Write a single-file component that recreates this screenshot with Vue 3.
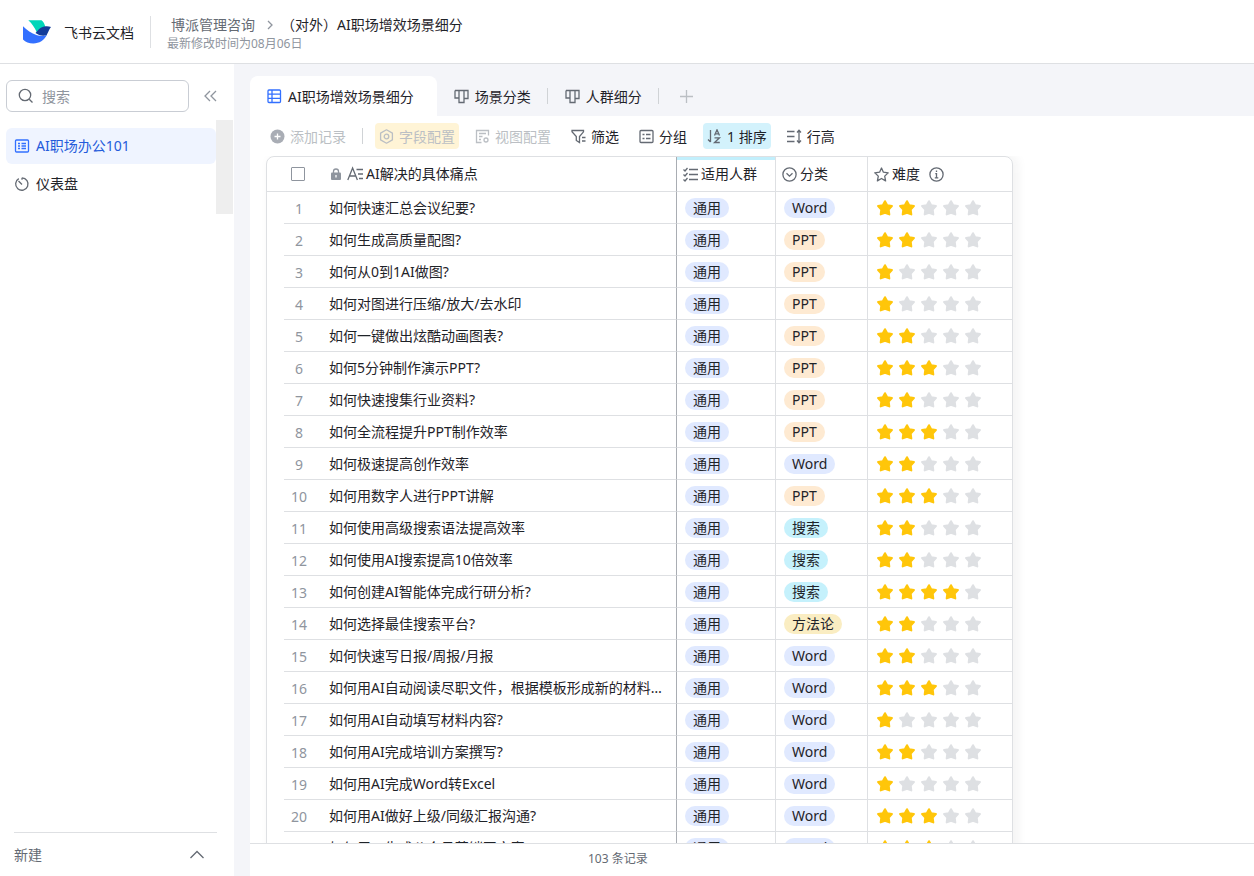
<script setup>
import { ref } from 'vue'

const keyword = ref('')
const allChecked = ref(false)

const tagColors = { Word: 'blue', PPT: 'orange', 搜索: 'cyan', 方法论: 'yellow' }

const rows = [
  ['如何快速汇总会议纪要?', 'Word', 2],
  ['如何生成高质量配图?', 'PPT', 2],
  ['如何从0到1AI做图?', 'PPT', 1],
  ['如何对图进行压缩/放大/去水印', 'PPT', 1],
  ['如何一键做出炫酷动画图表?', 'PPT', 2],
  ['如何5分钟制作演示PPT?', 'PPT', 3],
  ['如何快速搜集行业资料?', 'PPT', 2],
  ['如何全流程提升PPT制作效率', 'PPT', 3],
  ['如何极速提高创作效率', 'Word', 2],
  ['如何用数字人进行PPT讲解', 'PPT', 3],
  ['如何使用高级搜索语法提高效率', '搜索', 2],
  ['如何使用AI搜索提高10倍效率', '搜索', 2],
  ['如何创建AI智能体完成行研分析?', '搜索', 4],
  ['如何选择最佳搜索平台?', '方法论', 2],
  ['如何快速写日报/周报/月报', 'Word', 2],
  ['如何用AI自动阅读尽职文件，根据模板形成新的材料内容', 'Word', 3],
  ['如何用AI自动填写材料内容?', 'Word', 1],
  ['如何用AI完成培训方案撰写?', 'Word', 2],
  ['如何用AI完成Word转Excel', 'Word', 1],
  ['如何用AI做好上级/同级汇报沟通?', 'Word', 3],
  ['如何用AI生成公众号营销图文案?', 'Word', 3],
].map(([title, tag, stars]) => ({ title, tag, stars, color: tagColors[tag] }))
</script>

<template>
  <div class="page">
    <header class="topbar">
      <svg class="logo" viewBox="0 0 28 24">
        <path d="M0 6.300c4 4 8 7 14 9 4 1 7 1 10-.5-3 5.500-7.500 8.700-13.700 8.700C6 23.500 2.500 22 0 19.500z" fill="#3370ff" />
        <path d="M5.300 .3h13.200c2 1.500 3.200 3.800 3.700 6.200l-8.400 5.800C11.500 7.500 9 3.500 5.300 .3z" fill="#00d6b9" />
        <path d="M12.500 13c3-3.500 6-6.500 10-6.700 2-.1 4 0 5.500.7-2 2-2.500 5-4.300 8-3.700 1.700-8 .3-11.200-2z" fill="#133c9a" />
      </svg>
      <span class="brand">飞书云文档</span>
      <span class="top-divider"></span>
      <div class="heading">
        <nav class="crumbs">
          <a href="#">博派管理咨询</a>
          <svg class="chevron" viewBox="0 0 8 12"><path d="M2 2l4 4-4 4" /></svg>
          <span class="doc">（对外）AI职场增效场景细分</span>
        </nav>
        <div class="modified">最新修改时间为08月06日</div>
      </div>
    </header>

    <div class="body">
      <aside class="side">
        <div class="search-row">
          <label class="search">
            <svg class="i16" viewBox="0 0 16 16"><circle cx="7" cy="7" r="5.700" /><path d="M11.200 11.200L14.500 14.500" /></svg>
            <input v-model="keyword" type="text" placeholder="搜索" aria-label="搜索" />
          </label>
          <button class="collapse" aria-label="收起">
            <svg class="i16" viewBox="0 0 16 16"><path d="M8 3L3 8l5 5M14 3L9 8l5 5" /></svg>
          </button>
        </div>
        <div class="side-list">
          <nav>
            <a href="#" class="active">
              <svg class="i16" viewBox="0 0 16 16"><rect x="1.500" y="2" width="13" height="12" rx="1" /><path d="M4 5.500h2M7.500 5.500H12M4 8h2M7.500 8H12M4 10.500h2M7.500 10.500H12" /></svg>
              AI职场办公101
            </a>
            <a href="#">
              <svg class="i16" viewBox="0 0 16 16"><path d="M4.800 2.600A6.200 6.200 0 1 0 8 1.800M8 1.800v2M8 8.500L4.500 5" /></svg>
              仪表盘
            </a>
          </nav>
          <div class="scroll-thumb"></div>
        </div>
        <button class="create">
          <span>新建</span>
          <svg class="i16" viewBox="0 0 16 16"><path d="M1.500 11L8 4.500l6.500 6.500" /></svg>
        </button>
      </aside>

      <main class="main">
        <div class="tabs">
          <button class="tab current">
            <svg class="i15" viewBox="0 0 15 15"><rect x="1" y="1" width="12.500" height="12.500" rx="1" /><path d="M1 5.200h12.500M1 9.400h12.500M5 1v12.500" /></svg>
            AI职场增效场景细分
          </button>
          <button class="tab">
            <svg class="i15" viewBox="0 0 15 15"><path d="M1 1.500h13v8h-4v-8M1 1.500v7.500h4v-7.500M5 1.500v12h5V1.500" /></svg>
            场景分类
          </button>
          <span class="sep"></span>
          <button class="tab">
            <svg class="i15" viewBox="0 0 15 15"><path d="M1 1.500h13v8h-4v-8M1 1.500v7.500h4v-7.500M5 1.500v12h5V1.500" /></svg>
            人群细分
          </button>
          <span class="sep"></span>
          <button class="tab add" aria-label="新增视图">
            <svg class="i15" viewBox="0 0 15 15"><path d="M7.500 1v13M1 7.500h13" /></svg>
          </button>
        </div>

        <div class="sheet">
          <div class="toolbar">
            <button class="tool muted">
              <svg class="i15" viewBox="0 0 15 15"><circle cx="7.500" cy="7.500" r="7" class="solid" /><path d="M7.500 4.500v6M4.500 7.500h6" class="white" /></svg>
              添加记录
            </button>
            <span class="sep"></span>
            <button class="tool muted sand">
              <svg class="i15" viewBox="0 0 15 15"><path d="M7.500 .8l5.900 3.300v6.800l-5.900 3.300-5.900-3.300V4.100z" stroke-linejoin="round" /><circle cx="7.500" cy="7.500" r="2.300" /></svg>
              字段配置
            </button>
            <button class="tool muted">
              <svg class="i15" viewBox="0 0 15 15"><path d="M13.500 6.500v-5h-12v12h5M4 4.500h7M4 7.500h3.500M4 10.500h2" /><circle cx="11" cy="11" r="2" /></svg>
              视图配置
            </button>
            <button class="tool">
              <svg class="i15" viewBox="0 0 15 15"><path d="M1 1.500h11.500v1.300L8.500 7.500v6l-3.200-2V7.500L1 2.800zM11 8.500h3.500M11 12h3.500" /></svg>
              筛选
            </button>
            <button class="tool">
              <svg class="i15" viewBox="0 0 15 15"><rect x="1" y="1.500" width="13" height="12" rx="1" /><path d="M3.500 5.500h2M7 5.500h4.500M3.500 9.500h2M7 9.500h4.500" /></svg>
              分组
            </button>
            <button class="tool sky">
              <svg class="i15" viewBox="0 0 15 15"><path d="M3.500 1v12M1 10.500L3.500 13M7.500 6.500L10 .8l2.500 5.700M8.300 4.800h3.400M7.500 8.800h5l-5 4.700h5.300" /></svg>
              1 排序
            </button>
            <button class="tool">
              <svg class="i15" viewBox="0 0 15 15"><path d="M0 2.500h7.500M0 7.500h7.500M0 12.500h7.500M12 1v13M10 3.500L12 1.300l2 2.200M10 11.500l2 2.200 2-2.200" /></svg>
              行高
            </button>
          </div>

          <div class="grid-area">
            <table class="grid">
              <colgroup>
                <col class="c-no" /><col class="c-title" /><col class="c-group" /><col class="c-type" /><col class="c-level" />
              </colgroup>
              <thead>
                <tr>
                  <th class="no-head"><input v-model="allChecked" type="checkbox" aria-label="全选" /></th>
                  <th class="title-cell">
                    <div class="th">
                      <svg class="lock" viewBox="0 0 10 12"><path d="M2.500 5V3.500a2.500 2.500 0 0 1 5 0V5" /><rect x="0" y="4.500" width="10" height="7.500" rx="1" class="solid" /><path d="M5 7v2.500" class="white" /></svg>
                      <svg class="i16" viewBox="0 0 16 16"><path d="M.8 14L5.600 2l4.800 12M2.400 10h6.400M9.500 3.500H16M11 8h5M12 12.500h4" /></svg>
                      AI解决的具体痛点
                    </div>
                  </th>
                  <th class="sorted">
                    <div class="th">
                      <svg class="i15" viewBox="0 0 15 15"><path d="M6 2.500h9M6 7.500h9M6 12.500h9M.5 2.500L2 4l2.500-3M.5 7.500L2 9l2.500-3M.5 12.500L2 14l2.500-3" /></svg>
                      适用人群
                    </div>
                  </th>
                  <th>
                    <div class="th">
                      <svg class="i15" viewBox="0 0 15 15"><circle cx="7.500" cy="7.500" r="6.600" /><path d="M4.500 6.200l3 3 3-3" /></svg>
                      分类
                    </div>
                  </th>
                  <th>
                    <div class="th">
                      <svg class="i15" viewBox="0 0 15 15"><path stroke-linejoin="round" d="M7.500 1l1.900 4.200 4.800.6-3.500 3.300.9 4.800-4.100-2.400-4.100 2.400.9-4.800L.8 5.800l4.800-.6z" /></svg>
                      难度
                      <svg class="i15 info" viewBox="0 0 15 15"><circle cx="7.500" cy="7.500" r="6.600" /><path d="M7.500 3.500V5M6.300 6.700h1.200v4M5.800 10.800h3.500" /></svg>
                    </div>
                  </th>
                </tr>
              </thead>
              <tbody>
                <tr v-for="(row, i) in rows" :key="i">
                  <td class="no-cell"><div class="no">{{ i + 1 }}</div></td>
                  <td class="title-cell"><div class="text">{{ row.title }}</div></td>
                  <td><span class="pill blue">通用</span></td>
                  <td><span class="pill" :class="row.color">{{ row.tag }}</span></td>
                  <td>
                    <div class="stars" role="img" :aria-label="row.stars + ' / 5'">
                      <svg v-for="n in 5" :key="n" class="star" :class="{ on: n <= row.stars }" viewBox="0 0 16 16">
                        <path d="M8 1.200l2.200 4 4.700 .9-3.200 3.500.6 4.800L8 12.700l-4.300 1.700.6-4.800L1.100 6.100l4.700-.9z" />
                      </svg>
                    </div>
                  </td>
                </tr>
              </tbody>
            </table>
          </div>
          <footer class="status">103 条记录</footer>
        </div>
      </main>
    </div>
  </div>
</template>

<style>
body {
  margin: 0;
}
</style>

<style scoped>
.page {
  height: 100vh;
  display: flex;
  flex-direction: column;
  overflow: hidden;
  background: #fff;
  color: #1f2329;
  font-family: "Noto Sans", "Noto Sans CJK SC", sans-serif;
  font-size: 14px;
  line-height: 20px;
}
button,
input {
  font: inherit;
  color: inherit;
  border: 0;
  padding: 0;
  margin: 0;
  background: none;
}
a {
  color: inherit;
  text-decoration: none;
}
svg {
  flex: none;
  fill: none;
  stroke: #646a73;
  stroke-width: 1.3;
}
.i16 { width: 16px; height: 16px; }
.i15 { width: 15px; height: 15px; }

.topbar {
  display: flex;
  align-items: center;
  height: 63px;
  flex: none;
  padding-left: 23px;
  border-bottom: 1px solid #dee0e3;
}
.logo { width: 28px; height: 24px; stroke: none; }
.brand { margin-left: 13px; padding-top: 2px; }
.top-divider {
  width: 1px;
  height: 32px;
  margin: 0 16px;
  background: #dee0e3;
}
.heading { padding-top: 4px; }
.crumbs {
  display: flex;
  align-items: center;
  padding-left: 4px;
  color: #646a73;
}
.chevron { width: 8px; height: 12px; margin: 0 7px 0 11px; stroke: #8f959e; }
.doc { color: #1f2329; }
.modified {
  font-size: 12px;
  line-height: 18px;
  color: #8f959e;
}

.body {
  flex: 1;
  min-height: 0;
  display: flex;
}
.side {
  width: 234px;
  flex: none;
  display: flex;
  flex-direction: column;
}
.search-row {
  display: flex;
  align-items: center;
  padding: 16px 16px 8px 6px;
}
.search {
  flex: 1;
  min-width: 0;
  display: flex;
  align-items: center;
  gap: 8px;
  height: 30px;
  padding: 0 11px;
  border: 1px solid #c9cdd4;
  border-radius: 6px;
}
.search input {
  flex: 1;
  min-width: 0;
  padding-top: 2px;
  outline: none;
}
.search input::placeholder { color: #8f959e; opacity: 1; }
.collapse {
  display: flex;
  margin-left: 13px;
}
.collapse svg { stroke: #8f959e; }
.side-list {
  flex: 1;
  display: flex;
  align-items: flex-start;
}
.side-list nav {
  flex: 1;
  padding: 8px 0 0 6px;
}
.side-list a {
  display: flex;
  align-items: center;
  gap: 6px;
  height: 36px;
  padding-left: 8px;
  margin-bottom: 2px;
  border-radius: 6px;
}
.side-list .active {
  background: #eff4ff;
  color: #245bdb;
}
.side-list .active svg { stroke: #3370ff; }
.scroll-thumb {
  width: 17px;
  height: 94px;
  margin-right: 1px;
  background: #eee;
}
.create {
  display: flex;
  align-items: center;
  justify-content: space-between;
  height: 44px;
  margin: 0 17px 0 14px;
  padding-right: 12px;
  border-top: 1px solid #dee0e3;
  color: #646a73;
}

.main {
  flex: 1;
  min-width: 0;
  display: flex;
  flex-direction: column;
  padding: 12px 0 0 16px;
  background: #f4f5f9;
}
.tabs {
  display: flex;
  align-items: center;
  height: 40px;
  flex: none;
}
.tab {
  display: flex;
  align-items: center;
  gap: 6px;
  height: 40px;
  padding: 1px 16px 0 17px;
}
.tab.current {
  padding-right: 23px;
  border-radius: 8px 8px 0 0;
  background: #fff;
}
.tab.current svg { stroke: #3370ff; }
.tab.add { padding: 0 20px; }
.tab.add svg { stroke: #bbbfc4; }
.sep {
  width: 1px;
  height: 16px;
  background: #d0d3d6;
}
.sheet {
  flex: 1;
  min-height: 0;
  display: flex;
  flex-direction: column;
  background: #fff;
}
.toolbar {
  display: flex;
  align-items: center;
  gap: 12px;
  height: 40px;
  flex: none;
  padding-left: 16px;
}
.tool {
  display: flex;
  align-items: center;
  gap: 5px;
  height: 26px;
  padding: 1px 4px 0;
  border-radius: 4px;
}
.muted { color: #bbbfc4; }
.muted svg { stroke: #bbbfc4; }
.sand { background: #fff4d6; }
.sky { background: #d3f2fc; }
svg .solid { fill: #8f959e; stroke: none; }
.muted .solid { fill: #a9adb5; }
svg .white { stroke: #fff; }

.grid-area {
  flex: 1;
  min-height: 0;
  overflow: hidden;
  padding-left: 16px;
}
.grid {
  width: 747px;
  table-layout: fixed;
  border-collapse: separate;
  border-spacing: 0;
  border: 1px solid #dee0e3;
  border-radius: 8px;
  box-shadow: 4px 0 12px rgba(31, 35, 41, 0.06);
}
.c-no { width: 54px; }
.c-title { width: 356px; }
.c-group { width: 99px; }
.c-type { width: 92px; }
th,
td {
  padding: 0 0 0 8px;
  border-right: 1px solid #dee0e3;
  border-bottom: 1px solid #dee0e3;
  vertical-align: middle;
}
th:last-child,
td:last-child { border-right: 0; }
td:last-child { padding-left: 9px; }
th {
  height: 34px;
  padding-left: 6px;
  font-weight: 400;
  text-align: left;
}
td { height: 31px; }
.no-head { border-right: 0; padding-left: 24px; }
.no-head input {
  display: block;
  appearance: none;
  width: 14px;
  height: 14px;
  border: 1px solid #8f959e;
  border-radius: 1px;
}
.no-head input:checked { background: #3370ff; }
.no-cell { border: 0; padding: 0 0 0 17px; }
.no {
  height: 31px;
  padding: 0 7px 0 0;
  border-bottom: 1px solid #dee0e3;
  line-height: 34px;
  text-align: center;
  color: #8f959e;
}
.title-cell { border-right-color: #a9adb3; }
.th {
  display: flex;
  align-items: center;
  gap: 3px;
}
.title-cell .th { padding-left: 4px; }
.lock { width: 10px; height: 12px; margin-right: 3px; stroke: #8f959e; }
.sorted { box-shadow: inset 0 3px #c2effc; }
.info { margin-left: 6px; }
.text {
  padding-right: 12px;
  white-space: nowrap;
  overflow: hidden;
  text-overflow: ellipsis;
}
.pill {
  display: block;
  width: fit-content;
  padding: 0 8px;
  border-radius: 10px;
}
.blue { background: #e0e9ff; }
.orange { background: #feead2; }
.cyan { background: #c5f1fc; }
.yellow { background: #faedc2; }
.stars {
  display: flex;
  gap: 6px;
}
.star {
  width: 16px;
  height: 16px;
  fill: #dee0e3;
  stroke: #dee0e3;
  stroke-width: 2;
  stroke-linejoin: round;
}
.star.on {
  fill: #ffc60a;
  stroke: #ffc60a;
}
.status {
  flex: none;
  height: 32px;
  border-top: 1px solid #dee0e3;
  padding-left: 338px;
  font-size: 12px;
  line-height: 30px;
  color: #646a73;
}
</style>
